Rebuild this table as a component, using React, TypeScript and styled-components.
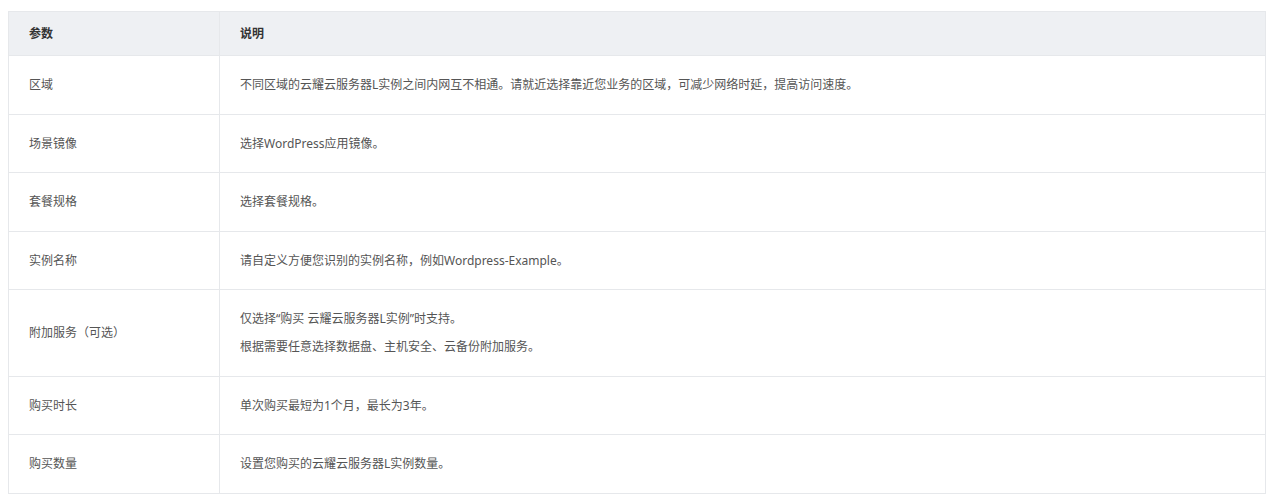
import React from "react";
import styled, { createGlobalStyle } from "styled-components";

const Global = createGlobalStyle`
  html, body { margin: 0; padding: 0; background: #fff; }
  body { font-family: "Noto Sans", "Noto Sans CJK SC", sans-serif; }
  *, *::before, *::after { box-sizing: border-box; }
`;

const Page = styled.div`
  padding: 11px 0 0 8px;
`;

const Table = styled.table`
  width: 1258px;
  border-collapse: collapse;
  table-layout: fixed;
  border: 1px solid #e6e8eb;
  font-size: 12px;
  color: #555;
`;

const HeadCell = styled.th<{ $w?: number }>`
  width: ${(p) => (p.$w ? `${p.$w}px` : "auto")};
  background: #eef0f3;
  text-align: left;
  font-weight: 700;
  color: #333;
  padding: 0 20px;
  height: 44px;
  border: 1px solid #e6e8eb;
  line-height: 20px;
`;

const Cell = styled.td`
  padding: 15px 20px;
  border: 1px solid #e6e8eb;
  line-height: 27.6px;
  vertical-align: middle;
`;

const Line = styled.div`
  line-height: 27.6px;
`;

const rows: [string, string[]][] = [
  ["区域", ["不同区域的云耀云服务器L实例之间内网互不相通。请就近选择靠近您业务的区域，可减少网络时延，提高访问速度。"]],
  ["场景镜像", ["选择WordPress应用镜像。"]],
  ["套餐规格", ["选择套餐规格。"]],
  ["实例名称", ["请自定义方便您识别的实例名称，例如Wordpress-Example。"]],
  ["附加服务（可选）", ["仅选择“购买 云耀云服务器L实例”时支持。", "根据需要任意选择数据盘、主机安全、云备份附加服务。"]],
  ["购买时长", ["单次购买最短为1个月，最长为3年。"]],
  ["购买数量", ["设置您购买的云耀云服务器L实例数量。"]],
];

export default function App() {
  return (
    <>
      <Global />
      <Page>
        <Table>
          <thead>
            <tr>
              <HeadCell $w={211}>参数</HeadCell>
              <HeadCell>说明</HeadCell>
            </tr>
          </thead>
          <tbody>
            {rows.map(([k, v]) => (
              <tr key={k}>
                <Cell>{k}</Cell>
                <Cell>
                  {v.map((l) => (
                    <Line key={l}>{l}</Line>
                  ))}
                </Cell>
              </tr>
            ))}
          </tbody>
        </Table>
      </Page>
    </>
  );
}
